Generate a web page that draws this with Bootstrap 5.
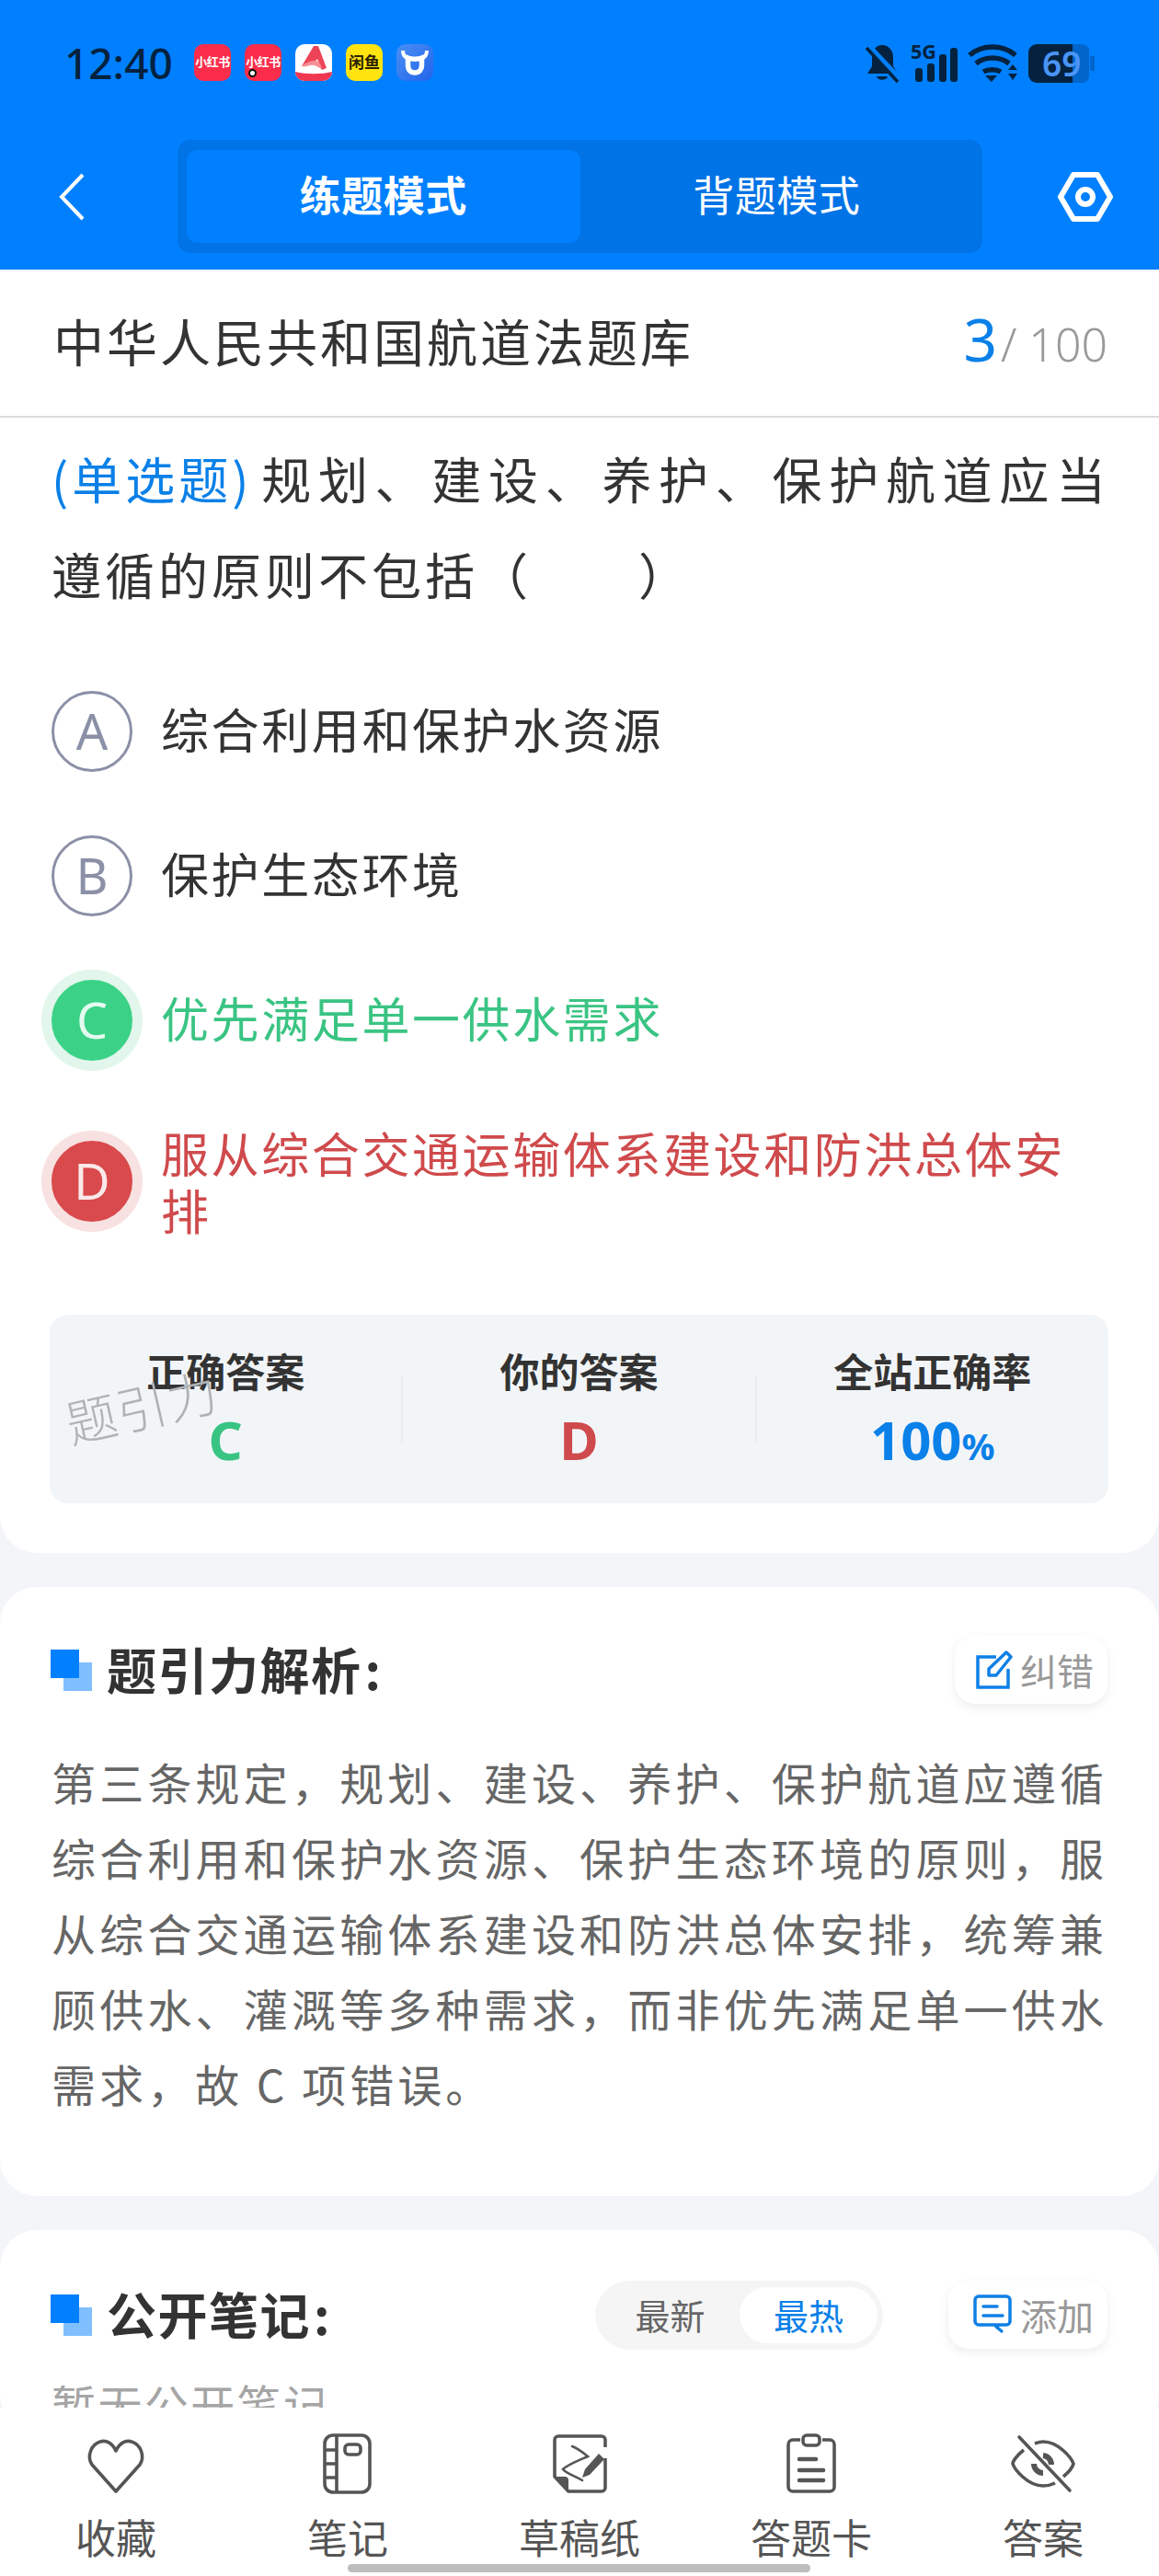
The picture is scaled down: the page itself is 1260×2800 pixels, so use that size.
<!DOCTYPE html>
<html lang="zh-CN">
<head>
<meta charset="UTF-8">
<meta name="viewport" content="width=device-width, initial-scale=1.0">
<title>题引力</title>
<link href="https://cdn.jsdelivr.net/npm/bootstrap@5.3.0/dist/css/bootstrap.min.css" rel="stylesheet">
<style>
html, body { height: 2800px; }
body { width: 1260px; background: #f3f5f8; font-family: "Noto Sans CJK SC", "Noto Sans", sans-serif; color: #333; overflow: hidden; }
.phone { height: 2800px; }
.top-head { background: #0080ff; height: 293px; flex: none; }
.status-row { height: 152px; padding: 47px 70px 0 70px; }
.clock { font-family: "Noto Sans", sans-serif; font-weight: 500; font-size: 46px; line-height: 42px; color: #04223f; width: 141px; }
.app-ico { position: relative; width: 40px; height: 40px; border-radius: 10px; margin-top: 1px; margin-right: 15px; font-size: 13px; letter-spacing: -.5px; line-height: 38px; text-align: center; color: #fff; font-weight: 700; overflow: hidden; white-space: nowrap; }
.app-red { background: #fb2d4a; }
.app-yellow { background: #ffe40f; color: #2b2100; font-size: 17px; letter-spacing: 0; }
.app-dot { position: absolute; left: 4px; top: 27px; width: 9px; height: 9px; border-radius: 50%; background: #fff; border: 2.5px solid #111; }
.sys-icons { margin-top: -10px; }
.nav-row { padding: 0 50px 0 64px; }
.mode-box { width: 875px; height: 123px; margin-left: 101px; padding: 11px 10px; background: #0073e6; border-radius: 14px; }
.mode-tab { width: 50%; height: 101px; border-radius: 12px; color: #fff; font-size: 45px; letter-spacing: .5px; line-height: 96px; text-align: center; }
.mode-on { background: #0080ff; font-weight: 700; }
.scroll-area { height: 2324px; flex: none; overflow: hidden; }
.sheet { background: #fff; }
.sheet-first { height: 1395px; border-radius: 0 0 40px 40px; }
.sheet-round { border-radius: 40px; margin-top: 37px; padding: 0 56px; }
.title-bar { height: 161px; padding: 0 56px 7px 58px; border-bottom: 2px solid #dcdcdc; }
.title-text { font-size: 55px; letter-spacing: 3px; line-height: 1; color: #333; }
.num-now { font-family: "Noto Sans", sans-serif; font-size: 64px; color: #0a80e8; line-height: 1; }
.num-all { font-family: "Noto Sans", sans-serif; font-weight: 300; font-size: 50px; color: #999; line-height: 1; margin-left: 4px; }
.q-text { padding: 14px 54px 0 56px; font-size: 54px; line-height: 104px; letter-spacing: 4px; color: #333; }
.q-first { text-align: justify; text-align-last: justify; }
.q-type { display: inline-block; color: #0a80e8; letter-spacing: 4px; margin-right: 6px; }
.opt-list { margin-top: 75px; padding: 0 56px; gap: 69px; }
.opt-item { min-height: 88px; font-size: 52px; letter-spacing: 2.6px; line-height: 62px; color: #333; }
.opt-one { margin-bottom: 6px; }
.opt-mark { width: 88px; height: 88px; flex: none; border-radius: 50%; border: 3px solid #8b90a6; color: #8b90a6; font-family: "Noto Sans", sans-serif; font-size: 54px; line-height: 80px; text-align: center; margin-right: 31px; letter-spacing: 0; }
.opt-good { color: #3ac483; }
.opt-good .opt-mark { background: #3bd287; border-color: #3bd287; color: #e4fbf0; box-shadow: 0 0 0 11px #e2f6ec; }
.opt-bad { color: #cf4a4c; }
.opt-bad .opt-mark { background: #d94a4c; border-color: #d94a4c; color: #fbe9e9; box-shadow: 0 0 0 11px #f8e1e1; }
.stat-box { position: relative; margin: 83px 55px 0 54px; height: 205px; background: #f2f5f8; border-radius: 20px; padding-top: 32px; }
.stat-col { width: 384px; height: 140px; text-align: center; }
.stat-line { width: 2px; height: 72px; background: #e8eaed; margin-top: 35px; flex: none; }
.stat-name { font-size: 43px; font-weight: 700; line-height: 56px; color: #333; }
.stat-val { font-family: "Noto Sans", sans-serif; font-weight: 700; font-size: 58px; line-height: 78px; margin-top: 9px; }
.stat-val small { font-size: 40px; font-weight: 700; }
.stat-blue { color: #0a80e8; }
.wm-text { position: absolute; left: 16px; top: 71px; font-size: 55px; font-weight: 300; line-height: 1; color: #b0b2b4; transform: rotate(-13deg); letter-spacing: 1px; }
.sec-head { height: 180px; }
.sec-head-tall { height: 184px; }
.sec-mark { position: relative; width: 45px; height: 45px; flex: none; margin-right: 16px; margin-left: -1px; }
.sec-mark i { position: absolute; width: 31px; height: 31px; display: block; }
.sec-mark i:first-child { right: 0; bottom: 0; background: #80bfff; }
.sec-mark i:last-child { left: 0; top: 0; background: #0080ff; }
.sec-title { font-size: 54px; font-weight: 700; letter-spacing: 1.5px; color: #333; line-height: 1; padding-bottom: 3px; }
.sec-colon { margin-left: 3px; }
.sec-btn { height: 74px; background: #fff; border-radius: 22px; box-shadow: 0 4px 12px rgba(0, 0, 0, .07); color: #999; font-size: 40px; padding: 0 15px 0 23px; line-height: 1; gap: 8px; }
.sec-btn-add { padding-left: 26px; }
.sec-body { font-size: 48px; line-height: 82px; letter-spacing: 4px; color: #666; height: 492px; margin-top: -10px; text-align: justify; }
.seg-box { width: 313px; height: 75px; border-radius: 38px; background: #f5f5f5; padding: 7px 6px; margin-right: 71px; font-size: 38px; color: #666; line-height: 59px; text-align: center; }
.seg-box span { flex: 1; }
.seg-box .seg-on { background: #fff; border-radius: 31px; color: #0a80e8; flex: none; width: 150px; }
.empty-note { font-size: 48px; line-height: 60px; letter-spacing: 2.4px; color: #a5a5a5; margin-top: -26px; }
.tool-bar { height: 183px; background: #fff; position: relative; flex: none; }
.tool-item { width: 252px; padding-top: 28px; text-align: center; font-size: 44px; color: #555; line-height: 1; }
.tool-item svg { display: block; margin: 0 auto 24px; }
.home-line { position: absolute; left: 378px; bottom: 4px; width: 503px; height: 9px; border-radius: 5px; background: #bdbdbd; }
</style>
</head>
<body>
<div class="phone d-flex flex-column">
  <header class="top-head">
    <div class="status-row d-flex align-items-start">
      <div class="clock">12:40</div>
      <div class="app-ico app-red">小红书</div>
      <div class="app-ico app-red">小红书<span class="app-dot"></span></div>
      <div class="app-ico">
        <svg class="d-block" width="40" height="40" viewBox="0 0 40 40"><rect width="40" height="40" fill="#fff"/><path d="M0 30c12 3 28 3 40 0v10H0z" fill="#f0374f"/><path d="M7 24 20 2h5l9 24-5 2-5-12-4 5z" fill="#ee4458"/><path d="M7 24c5-5 11-6 15-6 3 0 6 3 7 10-4-4-9-6-13-5-3 1-6 2-9 1z" fill="#f78f96"/></svg>
      </div>
      <div class="app-ico app-yellow">闲鱼</div>
      <div class="app-ico">
        <svg class="d-block" width="40" height="40" viewBox="0 0 40 40"><defs><linearGradient id="bullBg" x1="0" y1="0" x2="1" y2="1"><stop offset="0" stop-color="#4a90f5"/><stop offset="1" stop-color="#2263ea"/></linearGradient></defs><rect width="40" height="40" fill="url(#bullBg)"/><path d="M12.500 15c4 1.500 11 1.500 15 0v8c0 5-3 8-7.500 8s-7.500-3-7.500-8z" fill="none" stroke="#fff" stroke-width="5.500"/><path d="M7 7c0 5 2 8 7 9M33 7c0 5-2 8-7 9" fill="none" stroke="#fff" stroke-width="4"/></svg>
      </div>
      <div class="ms-auto d-flex">
        <svg class="sys-icons" width="250" height="64" viewBox="0 -10 250 64">
          <g fill="#04223f">
            <path d="M19 2c7 0 12 6 12 13v10l5 8H3l5-8V15C8 8 12 2 19 2zM13 36h12c-1 5-11 5-12 0z"/>
            <path d="M5 3l33 35" stroke="#0080ff" stroke-width="5"/>
            <path d="M2 5l34 37" stroke="#04223f" stroke-width="3.500"/>
            <rect x="55" y="27" width="8" height="15" rx="3"/><rect x="68" y="22" width="8" height="20" rx="3"/><rect x="81" y="12" width="8" height="30" rx="3"/><rect x="93" y="5" width="8" height="37" rx="3"/>
            <text x="50" y="17" font-family="Noto Sans" font-weight="700" font-size="21" textLength="28" lengthAdjust="spacingAndGlyphs">5G</text>
            <path d="M114 13c14-12 36-12 50 0M121 22c10-8 26-8 36 0M129 31c5-3 14-3 19 0" fill="none" stroke="#04223f" stroke-width="5.500"/>
            <path d="M131 35h13l-6 7zM156 29l5-6 5 6zM156 33h10l-5 7z"/>
            <path d="M178 10a9 9 0 0 1 9-9h39v42h-39a9 9 0 0 1-9-9z"/>
            <path d="M226 1h12a9 9 0 0 1 6 6v30a9 9 0 0 1-6 6h-12zM245 14h5v16h-5z" fill="#0066cc"/>
            <text x="193" y="36" font-family="Noto Sans" font-weight="600" font-size="37" fill="#4a95f5">69</text>
          </g>
        </svg>
      </div>
    </div>
    <div class="nav-row d-flex align-items-center">
      <svg width="28" height="52" viewBox="0 0 28 52"><path d="M26 2 3 26l23 24" fill="none" stroke="#fff" stroke-width="4"/></svg>
      <div class="mode-box d-flex">
        <div class="mode-tab mode-on">练题模式</div>
        <div class="mode-tab">背题模式</div>
      </div>
      <svg class="ms-auto" width="60" height="54" viewBox="0 0 60 54"><path d="M17 3h26l14 24-14 24H17L3 27z" fill="none" stroke="#fff" stroke-width="6" stroke-linejoin="round"/><circle cx="30" cy="27" r="8" fill="none" stroke="#fff" stroke-width="6"/></svg>
    </div>
  </header>

  <main class="scroll-area">
    <section class="sheet sheet-first">
      <div class="title-bar d-flex align-items-center justify-content-between">
        <div class="title-text">中华人民共和国航道法题库</div>
        <div class="d-flex align-items-baseline"><span class="num-now">3</span><span class="num-all">/ 100</span></div>
      </div>
      <div class="q-text">
        <div class="q-first"><span class="q-type">(单选题)</span>规划、建设、养护、保护航道应当</div>
        <div>遵循的原则不包括（&emsp;&emsp;）</div>
      </div>
      <div class="opt-list d-flex flex-column">
        <div class="opt-item d-flex align-items-center"><div class="opt-mark">A</div><div class="opt-one">综合利用和保护水资源</div></div>
        <div class="opt-item d-flex align-items-center"><div class="opt-mark">B</div><div class="opt-one">保护生态环境</div></div>
        <div class="opt-item opt-good d-flex align-items-center"><div class="opt-mark">C</div><div class="opt-one">优先满足单一供水需求</div></div>
        <div class="opt-item opt-bad d-flex align-items-center"><div class="opt-mark">D</div><div>服从综合交通运输体系建设和防洪总体安排</div></div>
      </div>
      <div class="stat-box d-flex">
        <div class="stat-col"><div class="stat-name">正确答案</div><div class="stat-val opt-good">C</div></div>
        <div class="stat-line"></div>
        <div class="stat-col"><div class="stat-name">你的答案</div><div class="stat-val opt-bad">D</div></div>
        <div class="stat-line"></div>
        <div class="stat-col"><div class="stat-name">全站正确率</div><div class="stat-val stat-blue">100<small>%</small></div></div>
        <div class="wm-text">题引力</div>
      </div>
    </section>

    <section class="sheet sheet-round">
      <div class="sec-head d-flex align-items-center">
        <div class="sec-mark"><i></i><i></i></div>
        <div class="sec-title">题引力解析<span class="sec-colon">:</span></div>
        <div class="sec-btn d-flex align-items-center ms-auto">
          <svg width="40" height="42" viewBox="0 0 40 42"><path d="M22 7H2v33h33V20" fill="none" stroke="#0f80e6" stroke-width="3.500"/><path d="M33 2l5 5-16 20h-8v-7z" fill="none" stroke="#0f80e6" stroke-width="3.500" stroke-linejoin="round"/></svg>
          <span>纠错</span>
        </div>
      </div>
      <div class="sec-body">第三条规定，规划、建设、养护、保护航道应遵循综合利用和保护水资源、保护生态环境的原则，服从综合交通运输体系建设和防洪总体安排，统筹兼顾供水、灌溉等多种需求，而非优先满足单一供水需求，故 C 项错误。</div>
    </section>

    <section class="sheet sheet-round">
      <div class="sec-head sec-head-tall d-flex align-items-center">
        <div class="sec-mark"><i></i><i></i></div>
        <div class="sec-title">公开笔记<span class="sec-colon">:</span></div>
        <div class="d-flex align-items-center ms-auto">
          <div class="seg-box d-flex"><span>最新</span><span class="seg-on">最热</span></div>
          <div class="sec-btn sec-btn-add d-flex align-items-center">
            <svg width="44" height="44" viewBox="0 0 44 44"><path d="M28 33H7a4 4 0 0 1-4-4V6a4 4 0 0 1 4-4h30a4 4 0 0 1 4 4v23a4 4 0 0 1-4 4h-8l-3 2 6 5" fill="none" stroke="#0f80e6" stroke-width="3.500" stroke-linejoin="round" stroke-linecap="round"/><path d="M12 13h15M12 23h21" stroke="#0f80e6" stroke-width="3.500" stroke-linecap="round"/></svg>
            <span>添加</span>
          </div>
        </div>
      </div>
      <div class="empty-note">暂无公开笔记</div>
    </section>
  </main>

  <nav class="tool-bar d-flex">
    <div class="tool-item">
      <svg width="70" height="66" viewBox="0 0 70 66"><path d="M35 21C31 12 24 9 18 11 8 14 3 27 9 36l26 29 26-29c6-9 1-22-9-25-6-2-13 1-17 10z" transform="translate(0 -2)" fill="none" stroke="#555" stroke-width="3.600" stroke-linejoin="round"/></svg>
      收藏
    </div>
    <div class="tool-item">
      <svg width="70" height="66" viewBox="0 0 70 66"><rect x="10" y="2" width="49" height="62" rx="9" fill="none" stroke="#555" stroke-width="3.600"/><path d="M23 2v62M10 18h13M10 33h13M10 48h13" stroke="#555" stroke-width="3.600"/><rect x="32" y="12" width="17" height="11" rx="4" fill="none" stroke="#555" stroke-width="3.600"/></svg>
      笔记
    </div>
    <div class="tool-item">
      <svg width="70" height="66" viewBox="0 0 70 66"><path d="M63 15V7a4 4 0 0 0-4-4H12a4 4 0 0 0-4 4v40l15 16h36a4 4 0 0 0 4-4V27" fill="none" stroke="#555" stroke-width="3.600" stroke-linejoin="round"/><path d="M8 47h11a4 4 0 0 1 4 4v12z" fill="#555"/><path d="M27 14c5 2 11 6 17 11-9 4-22 9-27 14 4 5 13 7 21 12" fill="none" stroke="#555" stroke-width="2.600" stroke-linecap="round"/><path d="M56 22l6 6-16 17-8 3 3-9z" fill="#555"/></svg>
      草稿纸
    </div>
    <div class="tool-item">
      <svg width="70" height="66" viewBox="0 0 70 66"><path d="M23 7h-8a5 5 0 0 0-5 5v46a5 5 0 0 0 5 5h40a5 5 0 0 0 5-5V12a5 5 0 0 0-5-5h-8" fill="none" stroke="#555" stroke-width="3.600"/><rect x="26" y="2" width="18" height="11" rx="4" fill="none" stroke="#555" stroke-width="3.600"/><path d="M22 28h18M22 40h26M22 51h26" stroke="#555" stroke-width="4.600" stroke-linecap="round"/></svg>
      答题卡
    </div>
    <div class="tool-item">
      <svg width="70" height="66" viewBox="0 0 70 66"><path d="M14 18C5 25 2 31 2 33c2 6 16 24 33 24 5 0 9-1 13-3M26 11c3-1 6-2 9-2 17 0 31 18 33 24-1 4-5 9-11 14" fill="none" stroke="#555" stroke-width="3.600"/><path d="M35 24a10 10 0 0 1 9 10M25 33c0 6 5 10 10 10" fill="none" stroke="#555" stroke-width="6"/><path d="M9 4l55 58" stroke="#555" stroke-width="3.600" stroke-linecap="round"/></svg>
      答案
    </div>
    <div class="home-line"></div>
  </nav>
</div>
</body>
</html>
